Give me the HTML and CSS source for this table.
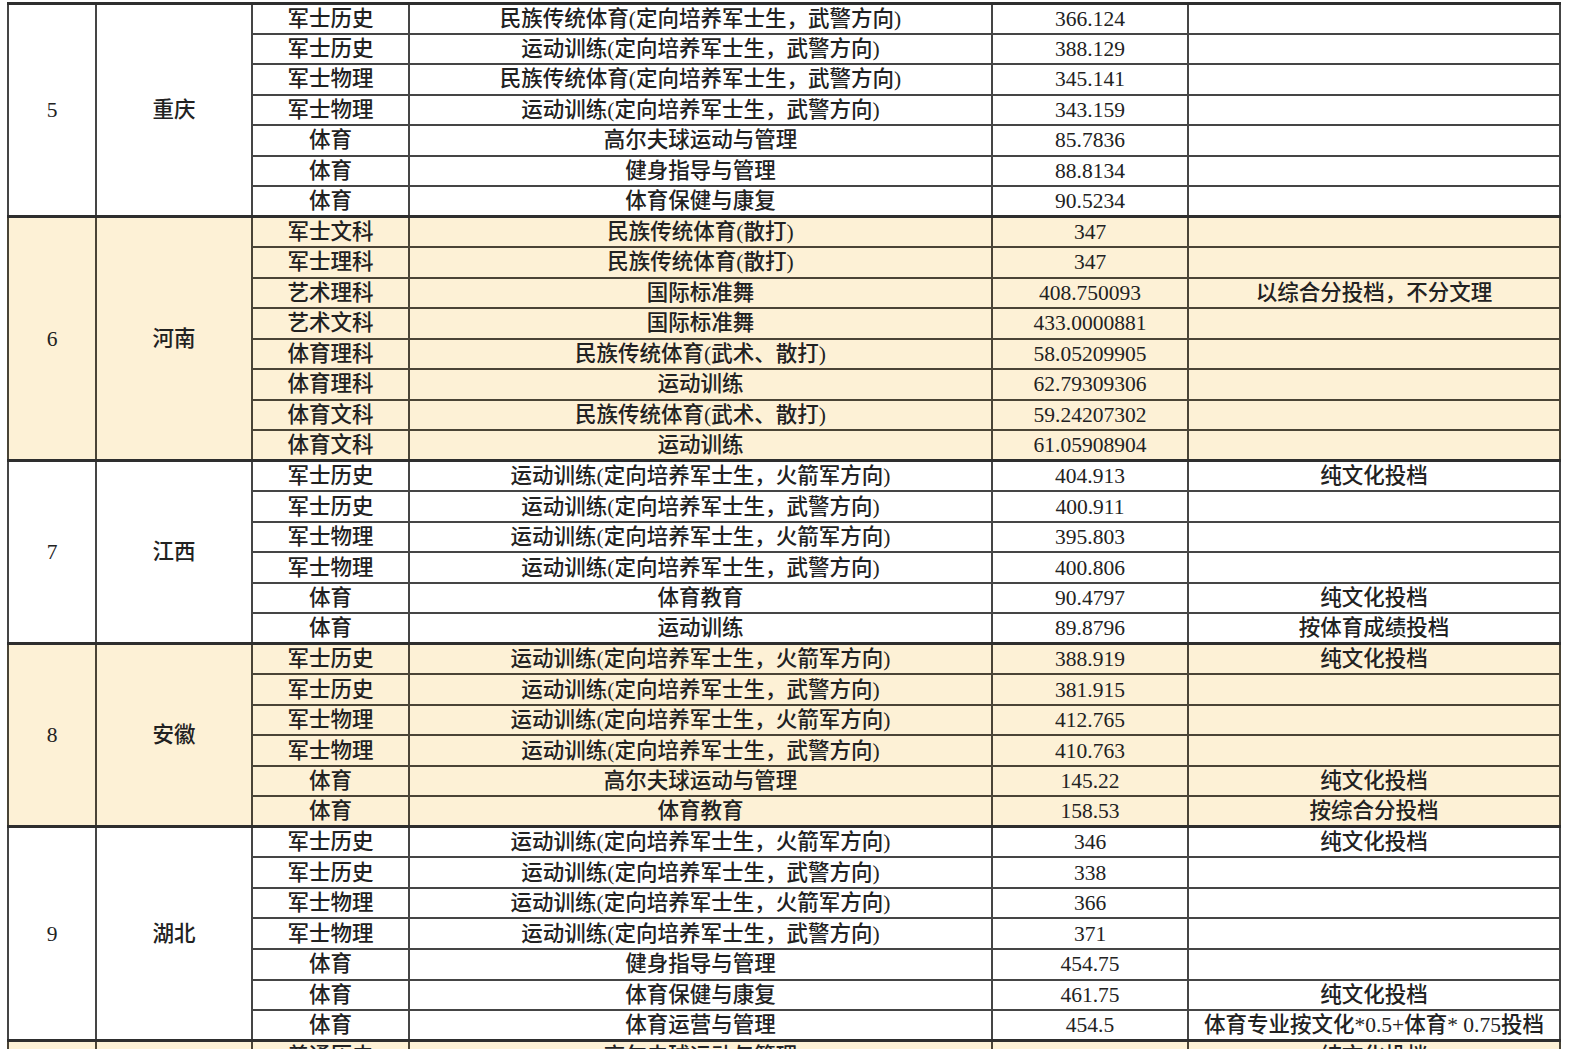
FILE: index.html
```html
<!DOCTYPE html>
<html lang="zh-CN">
<head>
<meta charset="utf-8">
<title>录取分数表</title>
<link rel="stylesheet" href="styles.css">
</head>
<body>
<table class="score-table">
  <colgroup>
    <col class="c-no"><col class="c-prov"><col class="c-type"><col class="c-major"><col class="c-score"><col class="c-note">
  </colgroup>
  <tbody class="grp">
    <tr><td rowspan="7">5</td><td rowspan="7">重庆</td><td>军士历史</td><td>民族传统体育(定向培养军士生，武警方向)</td><td>366.124</td><td></td></tr>
    <tr><td>军士历史</td><td>运动训练(定向培养军士生，武警方向)</td><td>388.129</td><td></td></tr>
    <tr><td>军士物理</td><td>民族传统体育(定向培养军士生，武警方向)</td><td>345.141</td><td></td></tr>
    <tr><td>军士物理</td><td>运动训练(定向培养军士生，武警方向)</td><td>343.159</td><td></td></tr>
    <tr><td>体育</td><td>高尔夫球运动与管理</td><td>85.7836</td><td></td></tr>
    <tr><td>体育</td><td>健身指导与管理</td><td>88.8134</td><td></td></tr>
    <tr><td>体育</td><td>体育保健与康复</td><td>90.5234</td><td></td></tr>
  </tbody>
  <tbody class="grp alt">
    <tr><td rowspan="8">6</td><td rowspan="8">河南</td><td>军士文科</td><td>民族传统体育(散打)</td><td>347</td><td></td></tr>
    <tr><td>军士理科</td><td>民族传统体育(散打)</td><td>347</td><td></td></tr>
    <tr><td>艺术理科</td><td>国际标准舞</td><td>408.750093</td><td>以综合分投档，不分文理</td></tr>
    <tr><td>艺术文科</td><td>国际标准舞</td><td>433.0000881</td><td></td></tr>
    <tr><td>体育理科</td><td>民族传统体育(武术、散打)</td><td>58.05209905</td><td></td></tr>
    <tr><td>体育理科</td><td>运动训练</td><td>62.79309306</td><td></td></tr>
    <tr><td>体育文科</td><td>民族传统体育(武术、散打)</td><td>59.24207302</td><td></td></tr>
    <tr><td>体育文科</td><td>运动训练</td><td>61.05908904</td><td></td></tr>
  </tbody>
  <tbody class="grp">
    <tr><td rowspan="6">7</td><td rowspan="6">江西</td><td>军士历史</td><td>运动训练(定向培养军士生，火箭军方向)</td><td>404.913</td><td>纯文化投档</td></tr>
    <tr><td>军士历史</td><td>运动训练(定向培养军士生，武警方向)</td><td>400.911</td><td></td></tr>
    <tr><td>军士物理</td><td>运动训练(定向培养军士生，火箭军方向)</td><td>395.803</td><td></td></tr>
    <tr><td>军士物理</td><td>运动训练(定向培养军士生，武警方向)</td><td>400.806</td><td></td></tr>
    <tr><td>体育</td><td>体育教育</td><td>90.4797</td><td>纯文化投档</td></tr>
    <tr><td>体育</td><td>运动训练</td><td>89.8796</td><td>按体育成绩投档</td></tr>
  </tbody>
  <tbody class="grp alt">
    <tr><td rowspan="6">8</td><td rowspan="6">安徽</td><td>军士历史</td><td>运动训练(定向培养军士生，火箭军方向)</td><td>388.919</td><td>纯文化投档</td></tr>
    <tr><td>军士历史</td><td>运动训练(定向培养军士生，武警方向)</td><td>381.915</td><td></td></tr>
    <tr><td>军士物理</td><td>运动训练(定向培养军士生，火箭军方向)</td><td>412.765</td><td></td></tr>
    <tr><td>军士物理</td><td>运动训练(定向培养军士生，武警方向)</td><td>410.763</td><td></td></tr>
    <tr><td>体育</td><td>高尔夫球运动与管理</td><td>145.22</td><td>纯文化投档</td></tr>
    <tr><td>体育</td><td>体育教育</td><td>158.53</td><td>按综合分投档</td></tr>
  </tbody>
  <tbody class="grp">
    <tr><td rowspan="7">9</td><td rowspan="7">湖北</td><td>军士历史</td><td>运动训练(定向培养军士生，火箭军方向)</td><td>346</td><td>纯文化投档</td></tr>
    <tr><td>军士历史</td><td>运动训练(定向培养军士生，武警方向)</td><td>338</td><td></td></tr>
    <tr><td>军士物理</td><td>运动训练(定向培养军士生，火箭军方向)</td><td>366</td><td></td></tr>
    <tr><td>军士物理</td><td>运动训练(定向培养军士生，武警方向)</td><td>371</td><td></td></tr>
    <tr><td>体育</td><td>健身指导与管理</td><td>454.75</td><td></td></tr>
    <tr><td>体育</td><td>体育保健与康复</td><td>461.75</td><td>纯文化投档</td></tr>
    <tr><td>体育</td><td>体育运营与管理</td><td>454.5</td><td>体育专业按文化*0.5+体育* 0.75投档</td></tr>
  </tbody>
  <tbody class="grp alt">
    <tr><td></td><td></td><td>普通历史</td><td>高尔夫球运动与管理</td><td>353</td><td>纯文化投档</td></tr>
  </tbody>
</table>
</body>
</html>
```

FILE: styles.css
```css
html, body {
  margin: 0;
  padding: 0;
  background: #ffffff;
  height: 100%;
  overflow: hidden;
}

.score-table {
  margin: 1.5px 0 0 7px;
  width: 1554px;
  table-layout: fixed;
  border-collapse: collapse;
  font-family: "Liberation Serif", "Noto Sans CJK SC", serif;
  font-size: 21.5px;
  font-weight: 500;
  color: #222222;
}

.c-no { width: 88px; }
.c-prov { width: 156px; }
.c-type { width: 157px; }
.c-major { width: 583px; }
.c-score { width: 196px; }
.c-note { width: 372px; }

.score-table tr {
  height: 30.52px;
}

.score-table td {
  border: 2px solid #454545;
  padding: 0;
  text-align: center;
  vertical-align: middle;
  line-height: 26px;
  white-space: nowrap;
  overflow: hidden;
}

.grp {
  border-top: 3px solid #2e2e2e;
}

.alt td {
  background: #fdf1d6;
  border-color: #4a4436;
}
```
